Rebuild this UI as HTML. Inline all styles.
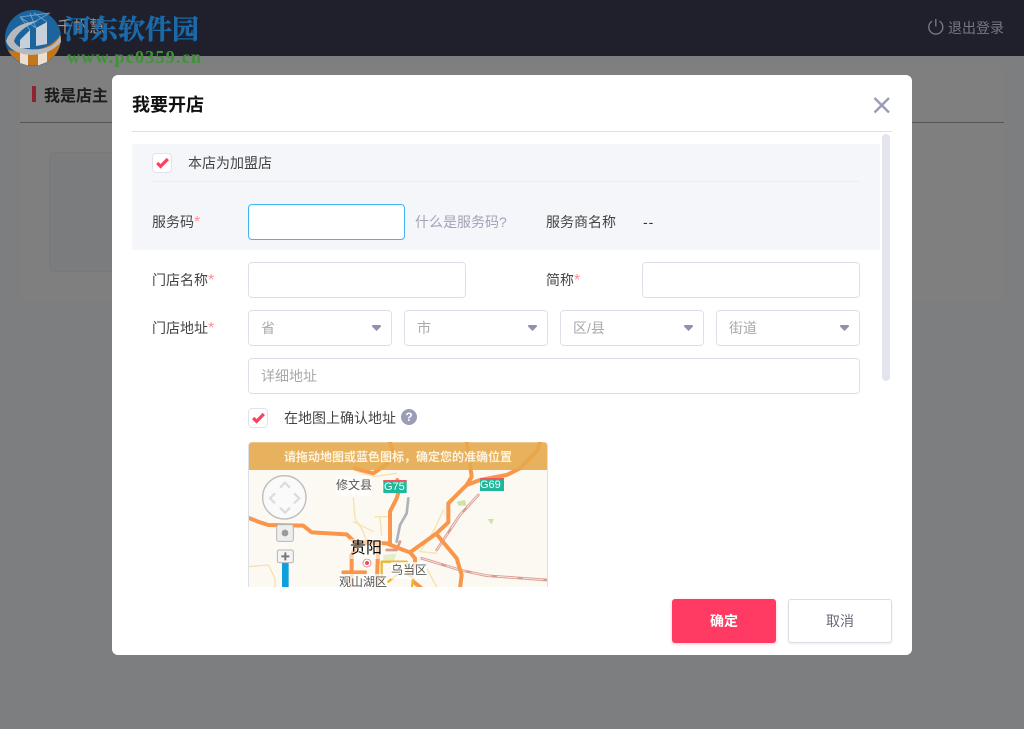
<!DOCTYPE html>
<html lang="zh">
<head>
<meta charset="utf-8">
<title>我要开店</title>
<style>
html,body{margin:0;padding:0}
body{width:1024px;height:729px;position:relative;overflow:hidden;background:#7d7e80;font-family:"Liberation Sans","Noto Sans CJK SC",sans-serif;font-size:14px;color:#333}
div,span{position:absolute;box-sizing:border-box}
.t{white-space:nowrap;line-height:20px;height:20px}
.i{background:#fff;border:1px solid #dddfe8;border-radius:4px}
.ph{color:#a9a9a9}
.s{color:#ff8f96;font-size:16px;position:static;line-height:14px}
.a{width:9px;height:6px;background:#8f92ab;clip-path:polygon(0 0,100% 0,100% 25%,50% 100%,0 25%);border-radius:1px}
.c{width:20px;height:20px;background:#fff;border:1px solid #e2e3ea;border-radius:4px}
</style>
</head>
<body>
<!-- page behind overlay -->
<div style="left:0;top:0;width:1024px;height:56px;background:#1f202c"></div>
<div class="t" style="left:57px;top:18px;color:#999;font-size:16px">千帆慧</div>
<svg style="position:absolute;left:927px;top:18px" width="18" height="18" viewBox="0 0 18 18" fill="none" stroke="#77787d" stroke-width="1.4"><path d="M5 3.2A7 7 0 1 0 12.6 3.2"/><path d="M8.8 1V8.5"/></svg>
<div class="t" style="left:948px;top:18px;color:#77787d;font-size:14px">退出登录</div>

<div style="left:20px;top:66px;width:984px;height:235px;background:#807f7f"></div>
<div style="left:20px;top:122px;width:984px;height:1px;background:#555"></div>
<div style="left:32px;top:86px;width:4px;height:16px;background:#8f2430"></div>
<div class="t" style="left:44px;top:87px;font-size:16px;font-weight:bold;color:#1c1c1c">我是店主</div>
<div style="left:49px;top:152px;width:200px;height:120px;background:#7b7c7e;border:1px solid #78797b;border-radius:3px"></div>

<!-- dialog -->
<div style="left:112px;top:75px;width:800px;height:580px;background:#fff;border-radius:6px"></div>
<div class="t" style="left:132px;top:93px;height:24px;line-height:24px;font-size:18px;font-weight:bold;color:#111">我要开店</div>
<svg style="position:absolute;left:873px;top:97px" width="18" height="17" viewBox="0 0 18 17" fill="none" stroke="#9a9db5" stroke-width="2.4"><path d="M1.5 1L16 15.5M16 1L1.5 15.5"/></svg>
<div style="left:132px;top:131px;width:760px;height:1px;background:#e0e0e2"></div>
<div style="left:882px;top:134px;width:8px;height:247px;background:#e3e5ee;border-radius:4px"></div>

<div style="left:132px;top:144px;width:748px;height:106px;background:#f5f6fa"></div>
<div class="c" style="left:152px;top:153px"><svg style="position:absolute;left:3px;top:3px" width="13" height="12" viewBox="0 0 13 12" fill="none" stroke="#fb3f5c" stroke-width="3.2"><path d="M1.2 6L4.6 9.4L11.8 2"/></svg></div>
<div class="t" style="left:188px;top:153px;color:#444">本店为加盟店</div>
<div style="left:152px;top:181px;width:708px;height:1px;background:#eceef2"></div>

<div class="t" style="left:152px;top:212px;color:#444">服务码<span class="s">*</span></div>
<div class="i" style="left:248px;top:204px;width:157px;height:36px;border-color:#40b5f5"></div>
<div class="t" style="left:415px;top:212px;color:#a0a3b8">什么是服务码?</div>
<div class="t" style="left:546px;top:212px;color:#444">服务商名称</div>
<div class="t" style="left:643px;top:212px;color:#333;letter-spacing:1px">--</div>

<div class="t" style="left:152px;top:270px;color:#444">门店名称<span class="s">*</span></div>
<div class="i" style="left:248px;top:262px;width:218px;height:36px"></div>
<div class="t" style="left:546px;top:270px;color:#444">简称<span class="s">*</span></div>
<div class="i" style="left:642px;top:262px;width:218px;height:36px"></div>

<div class="t" style="left:152px;top:318px;color:#444">门店地址<span class="s">*</span></div>
<div class="i" style="left:248px;top:310px;width:144px;height:36px"></div>
<div class="t ph" style="left:261px;top:318px">省</div><div class="a" style="left:372px;top:325px"></div>
<div class="i" style="left:404px;top:310px;width:144px;height:36px"></div>
<div class="t ph" style="left:417px;top:318px">市</div><div class="a" style="left:528px;top:325px"></div>
<div class="i" style="left:560px;top:310px;width:144px;height:36px"></div>
<div class="t ph" style="left:573px;top:318px">区/县</div><div class="a" style="left:684px;top:325px"></div>
<div class="i" style="left:716px;top:310px;width:144px;height:36px"></div>
<div class="t ph" style="left:729px;top:318px">街道</div><div class="a" style="left:840px;top:325px"></div>

<div class="i" style="left:248px;top:358px;width:612px;height:36px"></div>
<div class="t ph" style="left:261px;top:366px">详细地址</div>

<div class="c" style="left:248px;top:408px"><svg style="position:absolute;left:3px;top:3px" width="13" height="12" viewBox="0 0 13 12" fill="none" stroke="#fb3f5c" stroke-width="3.2"><path d="M1.2 6L4.6 9.4L11.8 2"/></svg></div>
<div class="t" style="left:284px;top:408px;color:#444">在地图上确认地址</div>
<div style="left:401px;top:409px;width:16px;height:16px;border-radius:50%;background:#9a9db8;color:#fff;font-size:12px;font-weight:bold;line-height:16px;text-align:center">?</div>

<!-- map -->
<div style="left:248px;top:442px;width:300px;height:145px;overflow:hidden;background:#fcf9f2;border-radius:4px 4px 0 0;border-left:1px solid #dcdfe8;border-right:1px solid #dcdfe8">
<svg style="position:absolute;left:-9px;top:-7px" width="320" height="160" viewBox="0 0 960 480" fill="none" stroke-linejoin="round" stroke-linecap="round">
<g stroke="#f5e2ae" stroke-width="4">
<path d="M340 190L345 250L370 290L380 320"/><path d="M405 245L450 245M340 260L400 290"/>
<path d="M24 395L85 390L105 430L105 456"/><path d="M610 225L580 290L540 350"/>
<path d="M340 105L400 125L470 115"/><path d="M310 412L360 412L375 456"/>
<path d="M420 245L425 300M545 350L590 355M560 400L590 456"/>
</g>
<path d="M650 200L675 195L680 212L655 212Z" fill="#cfe3a8" stroke="none"/>
<path d="M742 252L762 252L755 268Z" fill="#cfe3a8" stroke="none"/>
<path d="M430 360L470 355L460 385L430 385Z" fill="#e3eec8" stroke="none"/>
<g stroke="#d99a90" stroke-width="8">
<path d="M545 370L660 405L740 422L920 435"/>
<path d="M590 345L660 240L715 180"/>
<path d="M440 345L470 345L480 320"/>
</g>
<g stroke="#f6e4de" stroke-width="3" stroke-dasharray="60 18">
<path d="M545 370L660 405L740 422L920 435"/>
<path d="M590 345L660 240L715 180"/>
</g>
<path d="M505 190L500 235L480 270L470 320" stroke="#aeb2b8" stroke-width="8"/>
<g stroke="#f9964a" stroke-width="12">
<path d="M24 248L60 262L85 270L190 272L215 292L320 298L345 322L440 325L490 345L510 352L590 295L625 262L625 205L680 150L695 125L690 90L680 22"/>
<path d="M450 325L450 230L470 190L476 170L472 135"/>
<path d="M590 298L650 370L665 420L660 460"/>
<path d="M680 150L720 135L800 120L840 100L890 50L900 22"/>
<path d="M335 365L335 460"/><path d="M335 360L350 330L385 318"/>
<path d="M415 325L410 460"/><path d="M510 352L525 370L525 395"/>
<path d="M310 412L375 412"/><path d="M520 440L545 460"/>
<path d="M450 22L465 70L400 115L345 100"/>
</g>
<path d="M425 435L425 380L500 380L505 420L520 430L515 460M470 420L445 440" stroke="#ecb834" stroke-width="7"/>
<!-- header strip -->
<rect x="24" y="22" width="900" height="83" fill="#e5a84c" fill-opacity=".9" stroke="none"/>
<!-- shields -->
<rect x="430" y="135" width="70" height="39" fill="#1fb89a" stroke="none"/><rect x="430" y="135" width="70" height="6" fill="#f2555a" stroke="none"/>
<rect x="720" y="129" width="72" height="39" fill="#1fb89a" stroke="none"/><rect x="720" y="129" width="72" height="6" fill="#f2555a" stroke="none"/>
<!-- marker -->
<circle cx="381" cy="384" r="12" fill="#fff" stroke="#f08a90" stroke-width="3"/><circle cx="381" cy="384" r="6" fill="#ef4d5a" stroke="none"/>
<!-- nav control -->
<circle cx="133" cy="187" r="65" fill="#fafafa" stroke="#bcbcbc" stroke-width="4"/>
<path d="M120 158L135 143L150 158M120 218L135 233L150 218M105 175L90 190L105 205M162 175L178 190L162 205" stroke="#dcdcdc" stroke-width="7" stroke-linecap="butt"/>
<rect x="110" y="269" width="50" height="50" rx="6" fill="#eeeeee" stroke="#b5b5b5" stroke-width="3"/><circle cx="135" cy="294" r="10" fill="#9a9a9a" stroke="none"/>
<rect x="126" y="380" width="20" height="90" fill="#0e9fdc" stroke="none"/>
<rect x="112" y="345" width="48" height="38" rx="5" fill="#f4f4f4" stroke="#b5b5b5" stroke-width="3"/>
<path d="M136 352V376M124 364H148" stroke="#777" stroke-width="6" stroke-linecap="butt"/>
</svg>
<div class="t" style="left:0;top:4px;width:100%;padding-left:35px;font-size:12px;font-weight:bold;color:#fdf3dc;line-height:22px">请拖动地图或蓝色图标，确定您的准确位置</div>
<div class="t" style="left:87px;top:34px;font-size:12px;line-height:18px;color:#555;background:rgba(255,255,255,.6)">修文县</div>
<div class="t" style="left:135px;top:38px;font-size:11px;line-height:14px;height:14px;color:#fff">G75</div>
<div class="t" style="left:231px;top:36px;font-size:11px;line-height:14px;height:14px;color:#fff">G69</div>
<div class="t" style="left:101px;top:97px;font-size:16px;color:#000;background:rgba(255,255,255,.55);line-height:20px">贵阳</div>
<div class="t" style="left:142px;top:120px;font-size:12px;line-height:17px;height:17px;color:#555;background:rgba(255,255,255,.75)">乌当区</div>
<div class="t" style="left:90px;top:132px;font-size:12px;line-height:17px;height:17px;color:#555;background:rgba(255,255,255,.75)">观山湖区</div>
</div>

<!-- buttons -->
<div style="left:672px;top:599px;width:104px;height:44px;background:#ff3b63;border-radius:3px;color:#fff;font-size:14px;font-weight:bold;text-align:center;line-height:44px;box-shadow:0 1px 3px rgba(255,59,99,.3)">确定</div>
<div style="left:788px;top:599px;width:104px;height:44px;background:#fff;border:1px solid #dcdde6;border-radius:3px;color:#666a7a;font-size:14px;text-align:center;line-height:42px;box-shadow:0 1px 2px rgba(0,0,0,.08)">取消</div>

<!-- watermark -->
<svg style="position:absolute;left:0;top:5px" width="66" height="66" viewBox="0 0 66 66" fill="none">
<circle cx="33" cy="33" r="28" fill="#1c6aa8" fill-opacity=".92"/>
<path d="M8 45A28 28 0 0 0 61 31L50 40Q30 50 8 45Z" fill="#c4761c"/>
<path d="M20 58L20 47L28 48L28 60.5ZM38 60.5L38 47L47 45L47 57Z" fill="#eadfd0"/>
<path d="M6 36Q12 18 38 16Q18 24 14 36Q18 46 40 44Q56 42 60 30L61 37Q50 50 30 50Q10 48 6 36Z" fill="#b9b9bb"/>
<path d="M20 35L30 25L30 43L20 43ZM36 23L47 17L47 39L36 41Z" fill="#d8dbe0" fill-opacity=".9"/>
<path d="M20 12L50 8M25 22L50 8M30 25L20 12M36 23L30 8M47 17L34 8M20 12L36 23" stroke="#8fb8d8" stroke-width="1" stroke-opacity=".7"/>
</svg>
<div class="t" style="left:64px;top:12px;height:36px;line-height:36px;font-family:'Liberation Serif','Noto Serif CJK SC',serif;font-size:27px;font-weight:bold;color:#1a6db0;opacity:.95;-webkit-text-stroke:.5px #1a6db0">河东软件园</div>
<div class="t" style="left:67px;top:48px;height:18px;line-height:18px;font-family:'Liberation Serif',serif;font-size:18px;font-weight:bold;color:#3d9433;letter-spacing:1.25px">www.pc0359.cn</div>
</body>
</html>
